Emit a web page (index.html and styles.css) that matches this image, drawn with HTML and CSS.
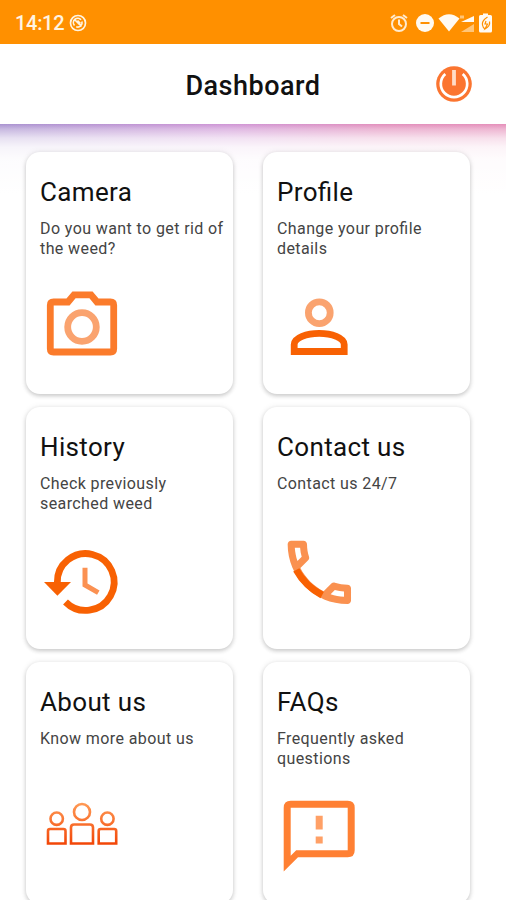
FILE: index.html
```html
<!doctype html>
<html lang="en">
  <head>
    <meta charset="UTF-8" />
    <meta name="viewport" content="width=device-width, initial-scale=1.0" />
    <title>Dashboard</title>
    <link rel="stylesheet" href="styles.css">
  </head>
  <body>
    <div class="status-bar">
      <span class="time">14:12</span>
      <svg class="status-left" width="18" height="18" viewBox="0 0 18 18">
        <circle cx="9" cy="9" r="7.500" />
        <path d="M5.500 11.500A4.300 4.300 0 0 1 12 5.700M6 6l6.500 6.500M7.200 12.700a4.300 4.300 0 0 0 5.700-5.200M8.500 6.500l3 3" />
      </svg>
      <svg class="status-right" width="106" height="22" viewBox="0 0 106 22">
        <!-- alarm -->
        <g class="line">
          <circle cx="11" cy="12" r="7" />
          <path d="M11 7.500V12l3 2.500M3 6l4-3M19 6l-4-3" />
        </g>
        <!-- do not disturb -->
        <circle cx="37" cy="11" r="9" />
        <path class="cut" d="M32.500 11h9" />
        <!-- wifi -->
        <path d="M50.500 6.500Q61 -2 71.500 6.500L61 19.500z" />
        <!-- signal -->
        <path d="M73 10 86 4v6z" />
        <path class="dim" d="M73 20 86 12v8z" />
        <path class="dim" d="M72 3.500h4v3h-4z" />
        <!-- battery -->
        <path d="M91 4.500q0-1.500 1.500-1.500H95V1.500h5V3h2.500q1.500 0 1.500 1.500v14.500q0 1.500-1.500 1.500h-10Q91 20.500 91 19z" />
        <path class="cut thin" d="M99.500 5q-6 4-5 8 .5 3 2.500 4M98 9l-1 3h2.500L97 17q5.500-3 4.500-7.500" />
      </svg>
    </div>

    <div class="main-header">
      <h1>Dashboard</h1>
      <button class="power" aria-label="Log out">
        <svg width="36" height="36" viewBox="0 0 36 36">
          <circle cx="18" cy="18" r="17.800" fill="#fb7530" />
          <path d="M9.300 8A13.200 13.200 0 1 0 26.700 8" fill="none" stroke="#fff" stroke-width="2.700" />
          <path d="M18 4v15.500" stroke="#ffdcc8" stroke-width="3.800" />
        </svg>
      </button>
    </div>

    <div class="content">
      <div class="card-container">
        <div class="card">
          <h2>Camera</h2>
          <p>Do you want to get rid of the weed?</p>
          <svg class="icon" viewBox="0 0 90 90">
            <path class="mid" d="M13.500 20H28l6-7.200h17l6 7.200h13.500q3.200 0 3.200 3.200v43.600q0 3.200-3.200 3.200h-57q-3.200 0-3.200-3.200V23.200q0-3.200 3.200-3.200z" />
            <circle class="light" cx="42" cy="45" r="14.300" />
          </svg>
        </div>

        <div class="card">
          <h2>Profile</h2>
          <p>Change your profile details</p>
          <svg class="icon" viewBox="0 0 90 90">
            <circle class="light" cx="42.300" cy="30.700" r="10.900" />
            <path class="dark" d="M17.200 69.500V62.500C17.200 55.500 30 51.400 42.200 51.400S67.200 55.500 67.200 62.500V69.500z" />
          </svg>
        </div>

        <div class="card">
          <h2>History</h2>
          <p>Check previously searched weed</p>
          <svg class="icon" viewBox="0 0 90 90">
            <path class="dark" d="M17.300 46A28.400 28.400 0 1 1 25.500 65" />
            <path class="arrow" d="M4 45h27L17.400 58.700z" />
            <path class="hands" d="M45 30.700V48l13.300 7.600" />
          </svg>
        </div>

        <div class="card">
          <h2>Contact us</h2>
          <p>Contact us 24/7</p>
          <svg class="icon" viewBox="0 0 90 90">
            <g transform="translate(.1 -6.900) scale(3.520)">
              <path class="phone" d="M6.540 5c.06.89.21 1.760.45 2.590l-1.200 1.200c-.41-1.200-.67-2.470-.76-3.790h1.510m9.860 12.020c.85.24 1.720.39 2.600.45v1.490c-1.320-.09-2.590-.35-3.800-.75l1.200-1.190M7.500 3H4c-.55 0-1 .45-1 1 0 9.390 7.610 17 17 17 .55 0 1-.45 1-1v-3.490c0-.55-.45-1-1-1-1.240 0-2.450-.2-3.570-.57-.1-.04-.21-.05-.31-.05-.26 0-.51.1-.71.290l-2.200 2.200c-2.830-1.450-5.150-3.760-6.590-6.590l2.200-2.200c.28-.28.36-.67.25-1.020C8.700 6.450 8.500 5.250 8.500 4c0-.55-.45-1-1-1z" />
              <path class="cord" d="M5.450 11.300Q8 15.900 12.800 18.500" />
            </g>
          </svg>
        </div>

        <div class="card">
          <h2>About us</h2>
          <p>Know more about us</p>
          <svg class="icon" viewBox="0 0 90 90">
            <defs>
              <linearGradient id="people" gradientUnits="userSpaceOnUse" x1="0" y1="11" x2="0" y2="53">
                <stop offset="0" stop-color="#ff9a55" />
                <stop offset="1" stop-color="#f24405" />
              </linearGradient>
            </defs>
            <g class="people">
              <circle cx="42" cy="20" r="8" />
              <circle cx="16.700" cy="26.700" r="6.200" />
              <circle cx="67.400" cy="26.700" r="6.200" />
              <path d="M31 51.500V35.500q0-3 3-3h16q3 0 3 3v16z" />
              <path d="M8 51.500V39q0-2 2-2h13.500q2 0 2 2v12.500z" />
              <path d="M58.700 51.500V39q0-2 2-2h13.500q2 0 2 2v12.500z" />
            </g>
          </svg>
        </div>

        <div class="card">
          <h2>FAQs</h2>
          <p>Frequently asked questions</p>
          <svg class="icon" viewBox="0 0 90 90">
            <path class="bubble" fill-rule="evenodd" d="M13.700 8.700h57q7 0 7 7v42.600q0 7-7 7H21L6.700 79.500V15.700q0-7 7-7zM13.700 15.700v48l5.500-5.400h51.500V15.700z" />
            <path class="bang" d="M38.700 23.700h7v13.800h-7zM38.700 44.400h7v7.200h-7z" />
          </svg>
        </div>
      </div>
    </div>
  </body>
</html>
```
FILE: styles.css
```css
:root {
  --bar: #ff9000;
  --orange-dark: #f86103;
  --orange: #fb7b2b;
  --orange-light: #faa36f;
  --text: #111;
  --text-soft: #444;
}

* {
  box-sizing: border-box;
}

body {
  margin: 0;
  height: 900px;
  overflow: hidden;
  background-color: #fff;
  color: var(--text);
  font-family: Roboto, sans-serif;
}

/* Status bar */
.status-bar {
  display: flex;
  align-items: center;
  height: 44px;
  padding: 1px 12px 0 15px;
  background-color: var(--bar);
  color: #fff4e2;
}

.time {
  font-size: 20px;
  font-weight: 500;
  letter-spacing: -0.3px;
}

.status-left {
  margin-left: 5px;
  fill: none;
  stroke: #fff4e2;
  stroke-width: 1.7;
}

.status-right {
  margin-left: auto;
  fill: #fffaf2;
}

.status-right .line {
  fill: none;
  stroke: #ffebcf;
  stroke-width: 2;
}

.status-right .cut {
  fill: none;
  stroke: var(--bar);
  stroke-width: 2;
}

.status-right .thin {
  stroke-width: 1.2;
}

.status-right .dim {
  opacity: 0.5;
}

/* Main Header */
.main-header {
  display: grid;
  grid-template-columns: 1fr auto 1fr;
  align-items: center;
  height: 80px;
  padding: 0 34px;
  background-color: #fff;
}

.main-header h1 {
  grid-column: 2;
  margin: 4px 0 0;
  font-size: 27px;
  font-weight: 500;
  line-height: 32px;
  letter-spacing: 0.5px;
}

.power {
  justify-self: end;
  height: 36px;
  padding: 0;
  border: none;
  background: none;
}

/* Coloured shade under the header, fading into the page */
.content {
  padding: 28px 36px 0 26px;
  background:
    linear-gradient(
      to bottom,
      rgba(255, 255, 255, 0) 0,
      rgba(255, 255, 255, 0.35) 5px,
      rgba(255, 255, 255, 0.72) 14px,
      rgba(255, 255, 255, 0.9) 23px,
      rgba(255, 255, 255, 0.97) 35px,
      #fff 70px
    ),
    linear-gradient(to right, #a993d0, #cf96d6 45%, #e290bd 75%, #e58fba);
}

/* Card Container */
.card-container {
  display: grid;
  grid-template-columns: 207px 207px;
  grid-auto-rows: 242px;
  gap: 13px 30px;
}

.card {
  padding: 24px 0 0 14px;
  border-radius: 14px;
  background-color: #fff;
  box-shadow:
    0 2px 4px rgba(0, 0, 0, 0.18),
    0 0 6px rgba(0, 0, 0, 0.08);
}

.card h2 {
  margin: 0;
  font-size: 26px;
  font-weight: 400;
  line-height: 33px;
  letter-spacing: 0.35px;
  font-feature-settings: 'liga' 1;
}

.card p {
  height: 40px;
  margin: 10px 0 0;
  color: var(--text-soft);
  font-size: 16px;
  line-height: 19.5px;
  letter-spacing: 0.4px;
  font-feature-settings: 'liga' 1;
}

/* Icons */
.icon {
  display: block;
  width: 90px;
  height: 90px;
  margin-top: 23px;
  fill: none;
  stroke-width: 6.8;
}

.light {
  stroke: var(--orange-light);
}

.mid {
  stroke: var(--orange);
}

.dark {
  stroke: var(--orange-dark);
}

.arrow {
  fill: var(--orange-dark);
}

.hands {
  stroke: #fb9152;
  stroke-width: 5;
}

.phone {
  fill: #fa9150;
}

.cord {
  stroke: var(--orange-dark);
  stroke-width: 2;
}

.people {
  stroke: url(#people);
  stroke-width: 2.6;
}

.bubble {
  fill: #ff8033;
}

.bang {
  fill: #ffa066;
}
```
